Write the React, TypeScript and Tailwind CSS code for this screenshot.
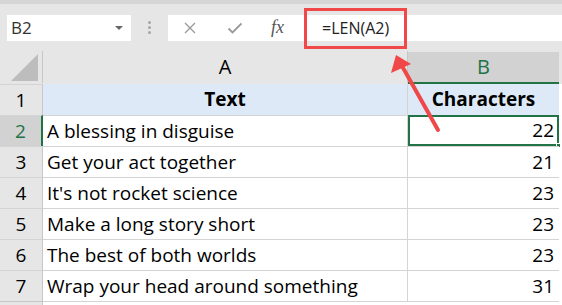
import React from 'react';

const rows = [
  { text: 'A blessing in disguise', n: 22 },
  { text: 'Get your act together', n: 21 },
  { text: "It's not rocket science", n: 23 },
  { text: 'Make a long story short', n: 23 },
  { text: 'The best of both worlds', n: 23 },
  { text: 'Wrap your head around something', n: 31 },
];

const font = { fontFamily: '"Open Sans", "Noto Sans", sans-serif' };

export default function App() {
  return (
    <div className="relative w-[562px] h-[305px] overflow-hidden bg-[#e6e6e6] text-black" style={font}>
      {/* toolbar */}
      <div className="h-[4px] bg-[#d6d6d6]" />
      <div className="flex items-center h-[47px] pb-[10px] pt-[10px]">
        <div className="ml-[7px] w-[124px] h-[26px] bg-white flex items-center justify-between pl-[4px] pr-[8px]">
          <span className="text-[17px] text-[#333]">B2</span>
          <span className="w-0 h-0 border-l-[4px] border-r-[4px] border-t-[4px] border-l-transparent border-r-transparent border-t-[#666]" />
        </div>
        <div className="ml-[17px] flex flex-col gap-[2px]">
          <span className="w-[3px] h-[3px] rounded-full bg-[#a6a6a6]" />
          <span className="w-[3px] h-[3px] rounded-full bg-[#a6a6a6]" />
          <span className="w-[3px] h-[3px] rounded-full bg-[#a6a6a6]" />
        </div>
        <div className="ml-[17px] flex-1 h-[26px] bg-white flex items-center">
          <svg width="14" height="14" viewBox="0 0 14 14" className="ml-[15px]">
            <path d="M2 2 L12 12 M12 2 L2 12" stroke="#9a9a9a" strokeWidth="1.4" fill="none" />
          </svg>
          <svg width="16" height="14" viewBox="0 0 16 14" className="ml-[30px]">
            <path d="M1.5 7.5 L5.5 11.5 L14.5 2.5" stroke="#9a9a9a" strokeWidth="1.8" fill="none" />
          </svg>
          <span className="ml-[28px] italic text-[18px] text-[#555]" style={{ fontFamily: '"Liberation Serif", serif' }}>fx</span>
          <span className="ml-[38px] text-[16px] text-[#222]">=LEN(A2)</span>
        </div>
      </div>

      {/* grid */}
      <div className="grid grid-cols-[43px_365px_151px_3px]">
        {/* column headers */}
        <div className="h-[32px] bg-[#e6e6e6] border-r border-[#c6c6c6] relative">
          <div className="absolute right-[4px] bottom-[2px] w-0 h-0 border-l-[27px] border-b-[27px] border-l-transparent border-b-[#bdbdbd]" />
        </div>
        <div className="h-[32px] flex items-end justify-center pb-[1px] text-[20px] border-r border-[#c6c6c6]">A</div>
        <div className="h-[32px] mt-[1px] bg-[#d2d2d2] border-b-2 border-[#217346] flex items-end justify-center text-[20px] text-[#217346]">B</div>
        <div className="h-[32px]" />

        {/* row 1 */}
        <div className="h-[31px] bg-[#e6e6e6] border-r border-[#c6c6c6] border-t border-t-[#d4d4d4] flex items-center justify-center text-[19px]">1</div>
        <div className="h-[31px] bg-[#dde9f6] border-r border-[#d4d4d4] flex items-center justify-center font-bold text-[19px]">Text</div>
        <div className="h-[31px] bg-[#dde9f6] flex items-center justify-center font-bold text-[19px]">Characters</div>
        <div className="h-[31px] bg-white" />

        {rows.map((r, i) => {
          const sel = i === 0;
          return (
            <React.Fragment key={i}>
              <div
                className={
                  'h-[31px] flex items-center justify-center text-[19px] border-t border-[#d4d4d4] border-r ' +
                  (sel ? 'bg-[#d2d2d2] text-[#217346] border-r-2 border-r-[#217346]' : 'bg-[#e6e6e6] border-r-[#c6c6c6]')
                }
              >
                {i + 2}
              </div>
              <div className="h-[31px] bg-white border-t border-r border-[#d4d4d4] flex items-center pl-[4px] text-[19px] whitespace-nowrap">
                {r.text}
              </div>
              <div
                className={
                  'h-[31px] bg-white flex items-center justify-end text-[19px] relative ' +
                  (sel ? 'border-2 border-[#217346] pr-[3px]' : 'border-t border-[#d4d4d4] pr-[5px]')
                }
              >
                {r.n}
                {sel && <span className="absolute right-[-4px] bottom-[-4px] w-[5px] h-[5px] bg-[#217346] border border-white" />}
              </div>
              <div className="h-[31px] bg-white" />
            </React.Fragment>
          );
        })}
        <div className="h-[10px] bg-[#e6e6e6] border-t border-r border-[#c6c6c6]" />
        <div className="h-[10px] bg-white border-t border-[#d4d4d4]" />
        <div className="h-[10px] bg-white border-t border-[#d4d4d4]" />
        <div className="h-[10px] bg-white" />
      </div>

      {/* annotation */}
      <div className="absolute left-[304px] top-[8px] w-[103px] h-[41px] border-[3px] border-[#f04848]" />
      <svg className="absolute left-0 top-0" width="562" height="305">
        <line x1="438" y1="130" x2="402" y2="66" stroke="#f04848" strokeWidth="4" strokeLinecap="round" />
        <polygon points="396,55 391,73 411,64" fill="#f04848" />
      </svg>
    </div>
  );
}
